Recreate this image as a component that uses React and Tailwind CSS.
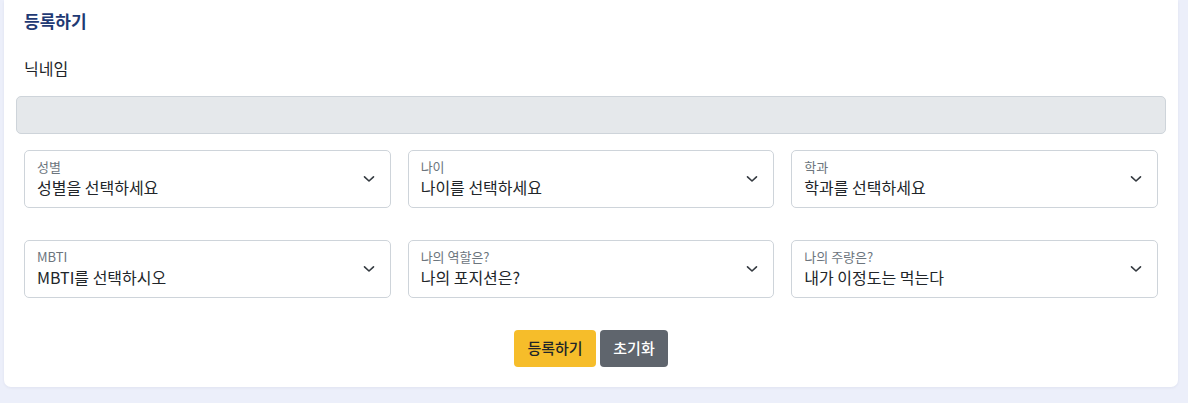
import React from "react";

const font = { fontFamily: '"Noto Sans CJK KR", "Noto Sans", sans-serif' };

function Chevron() {
  return (
    <svg width="12" height="8" viewBox="0 0 12 8" fill="none" className="shrink-0">
      <path d="M1.5 1.8 L6 6 L10.5 1.8" stroke="#343a40" strokeWidth="1.6" strokeLinecap="round" strokeLinejoin="round" />
    </svg>
  );
}

function Select({ label, value }) {
  return (
    <div className="flex h-[58px] items-center justify-between rounded-[5px] border border-[#ced4da] bg-white pl-3 pr-[15px]">
      <div className="flex flex-col">
        <span className="text-[13px] leading-[16px] text-[#6c757d]">{label}</span>
        <span className="text-base leading-[24px] text-[#212529]">{value}</span>
      </div>
      <Chevron />
    </div>
  );
}

export default function App() {
  return (
    <div className="min-h-[403px] w-[1188px] bg-[#eceffa] pl-1 pr-[10px]" style={font}>
      <div className="rounded-b-[7px] bg-white px-3 pb-5 pt-[9px] shadow-[0_1px_3px_rgba(30,40,90,0.06)]">
        <h2 className="px-2 text-[17px] font-bold leading-6 text-[#1f3a74]">등록하기</h2>
        <div className="mt-[23px] px-2 text-base leading-6 text-[#212529]">닉네임</div>
        <div className="mt-4 h-[38px] rounded-[5px] border border-[#ced4da] bg-[#e5e8eb]" />
        <div className="mt-4 grid grid-cols-3 gap-x-[17px] gap-y-[32px] px-2">
          <Select label="성별" value="성별을 선택하세요" />
          <Select label="나이" value="나이를 선택하세요" />
          <Select label="학과" value="학과를 선택하세요" />
          <Select label="MBTI" value="MBTI를 선택하시오" />
          <Select label="나의 역할은?" value="나의 포지션은?" />
          <Select label="나의 주량은?" value="내가 이정도는 먹는다" />
        </div>
        <div className="mt-8 flex justify-center gap-1">
          <button className="h-[37px] w-[82px] rounded-[4px] bg-[#f6bd2a] text-[15px] font-medium text-[#212529]">등록하기</button>
          <button className="h-[37px] w-[68px] rounded-[4px] bg-[#5f656d] text-[15px] font-medium text-white">초기화</button>
        </div>
      </div>
    </div>
  );
}
